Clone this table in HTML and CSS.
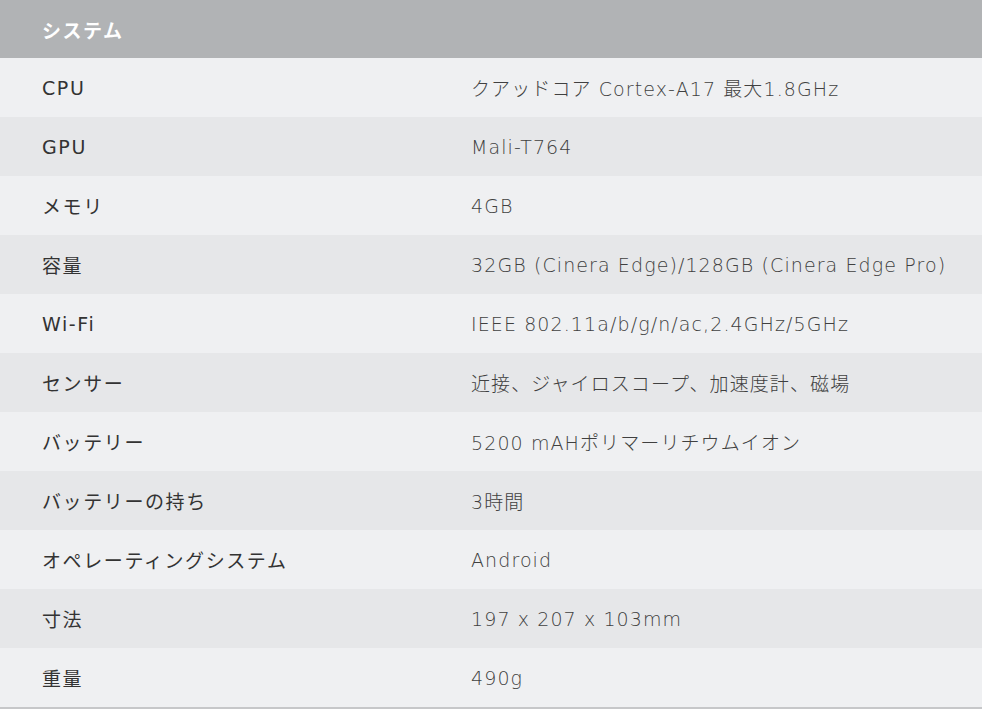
FILE: index.html
```html
<!DOCTYPE html>
<html lang="ja">
<head>
<meta charset="utf-8">
<title>システム</title>
<link rel="stylesheet" href="styles.css">
</head>
<body>
<section class="spec">
  <h2 class="spec-title">システム</h2>
  <div class="spec-row odd"><div class="spec-label">CPU</div><div class="spec-value">クアッドコア Cortex-A17 最大1.8GHz</div></div>
  <div class="spec-row even"><div class="spec-label">GPU</div><div class="spec-value">Mali-T764</div></div>
  <div class="spec-row odd"><div class="spec-label">メモリ</div><div class="spec-value">4GB</div></div>
  <div class="spec-row even"><div class="spec-label">容量</div><div class="spec-value">32GB (Cinera Edge)/128GB (Cinera Edge Pro)</div></div>
  <div class="spec-row odd"><div class="spec-label">Wi-Fi</div><div class="spec-value">IEEE 802.11a/b/g/n/ac,2.4GHz/5GHz</div></div>
  <div class="spec-row even"><div class="spec-label">センサー</div><div class="spec-value">近接、ジャイロスコープ、加速度計、磁場</div></div>
  <div class="spec-row odd"><div class="spec-label">バッテリー</div><div class="spec-value">5200 mAHポリマーリチウムイオン</div></div>
  <div class="spec-row even"><div class="spec-label">バッテリーの持ち</div><div class="spec-value">3時間</div></div>
  <div class="spec-row odd"><div class="spec-label">オペレーティングシステム</div><div class="spec-value">Android</div></div>
  <div class="spec-row even"><div class="spec-label">寸法</div><div class="spec-value">197 x 207 x 103mm</div></div>
  <div class="spec-row odd"><div class="spec-label">重量</div><div class="spec-value">490g</div></div>
</section>
</body>
</html>
```
FILE: styles.css
```css
html, body {
  margin: 0;
  padding: 0;
  background: #eff0f2;
}
body {
  font-family: "DejaVu Sans", "Noto Sans CJK JP", sans-serif;
}
.spec {
  display: flex;
  flex-direction: column;
  border-bottom: 2px solid #c6c7c9;
}
.spec-title {
  margin: 0;
  height: 58px;
  display: flex;
  align-items: center;
  padding-left: 42px;
  background: #b1b3b5;
  color: #ffffff;
  font-family: "Noto Sans CJK JP", sans-serif;
  font-size: 19px;
  font-weight: 700;
  letter-spacing: 1.5px;
}
.spec-row {
  display: grid;
  grid-template-columns: 429px 1fr;
  align-items: center;
  height: 59px;
  padding-left: 42px;
}
.odd { background: #eff0f2; }
.even { background: #e6e7e9; }
.spec-label {
  font-size: 19px;
  letter-spacing: 1.6px;
  color: #333333;
  font-weight: 400;
}
.spec-value {
  font-size: 19px;
  letter-spacing: 1.1px;
  color: #404040;
  font-weight: 300;
}
```
